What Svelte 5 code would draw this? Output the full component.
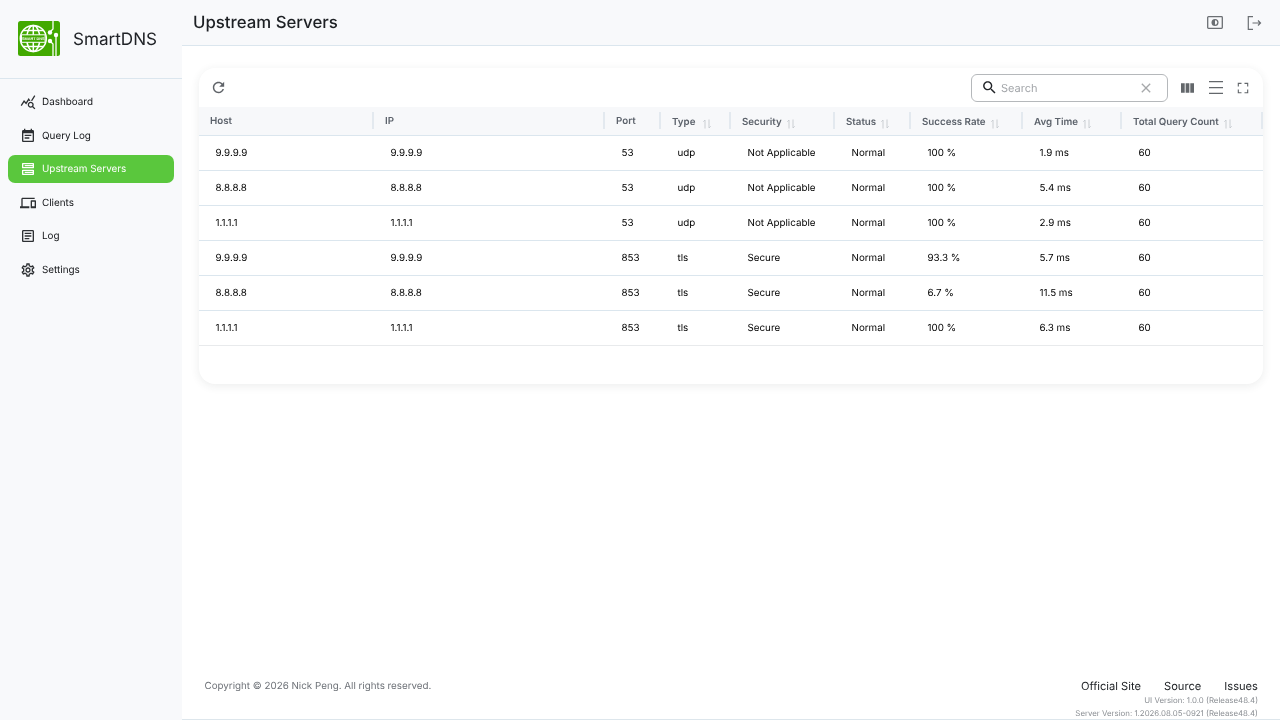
<script>
  const columns = [
    { key: 'Host', width: 175 },
    { key: 'IP', width: 231 },
    { key: 'Port', width: 56 },
    { key: 'Type', width: 70, sort: true, wide: true },
    { key: 'Security', width: 104, sort: true },
    { key: 'Status', width: 76, sort: true },
    { key: 'Success Rate', width: 112, sort: true },
    { key: 'Avg Time', width: 99, sort: true },
    { key: 'Total Query Count', width: 141, sort: true }
  ];
  const rows = [
    ['9.9.9.9', '9.9.9.9', '53', 'udp', 'Not Applicable', 'Normal', '100 %', '1.9 ms', '60'],
    ['8.8.8.8', '8.8.8.8', '53', 'udp', 'Not Applicable', 'Normal', '100 %', '5.4 ms', '60'],
    ['1.1.1.1', '1.1.1.1', '53', 'udp', 'Not Applicable', 'Normal', '100 %', '2.9 ms', '60'],
    ['9.9.9.9', '9.9.9.9', '853', 'tls', 'Secure', 'Normal', '93.3 %', '5.7 ms', '60'],
    ['8.8.8.8', '8.8.8.8', '853', 'tls', 'Secure', 'Normal', '6.7 %', '11.5 ms', '60'],
    ['1.1.1.1', '1.1.1.1', '853', 'tls', 'Secure', 'Normal', '100 %', '6.3 ms', '60']
  ];
  const nav = [
    { label: 'Dashboard', d: 'M19.88 18.47c.44-.7.7-1.51.7-2.39 0-2.49-2.01-4.5-4.5-4.5s-4.5 2.01-4.5 4.5 2.01 4.5 4.49 4.5c.88 0 1.7-.26 2.39-.7L21.58 23 23 21.58l-3.12-3.11zm-3.8.11c-1.38 0-2.5-1.12-2.5-2.5s1.12-2.5 2.5-2.5 2.5 1.12 2.5 2.5-1.12 2.5-2.5 2.5zm-.36-8.5c-.74.02-1.45.18-2.1.45l-.55-.83-3.8 6.18-3.01-3.52-3.63 5.81L1 17l5-8 3 3.5L13 6l2.72 4.08zm2.59.5c-.64-.28-1.33-.45-2.05-.49L21.38 2 23 3.18l-4.69 7.4z' },
    { label: 'Query Log', d: 'M17 10H7v2h10v-2zm2-7h-1V1h-2v2H8V1H6v2H5c-1.11 0-1.99.9-1.99 2L3 19c0 1.1.89 2 2 2h14c1.1 0 2-.9 2-2V5c0-1.1-.9-2-2-2zm0 16H5V8h14v11zm-5-5H7v2h7v-2z' },
    { label: 'Upstream Servers', active: true, d: 'M19 15v4H5v-4h14m1-2H4c-.55 0-1 .45-1 1v6c0 .55.45 1 1 1h16c.55 0 1-.45 1-1v-6c0-.55-.45-1-1-1zM7 16h12v2H7zM19 5v4H5V5h14m1-2H4c-.55 0-1 .45-1 1v6c0 .55.45 1 1 1h16c.55 0 1-.45 1-1V4c0-.55-.45-1-1-1zM7 6h12v2H7z' },
    { label: 'Clients', d: 'M4 6h18V4H4c-1.1 0-2 .9-2 2v11H0v3h14v-3H4V6zm19 2h-6c-.55 0-1 .45-1 1v10c0 .55.45 1 1 1h6c.55 0 1-.45 1-1V9c0-.55-.45-1-1-1zm-1 9h-4v-7h4v7z' },
    { label: 'Log', d: 'M19 5v14H5V5h14m0-2H5c-1.1 0-2 .9-2 2v14c0 1.1.9 2 2 2h14c1.1 0 2-.9 2-2V5c0-1.1-.9-2-2-2zM14 17H7v-2h7v2zm3-4H7v-2h10v2zm0-4H7V7h10v2z' },
    { label: 'Settings', d: 'M19.43 12.98c.04-.32.07-.64.07-.98 0-.34-.03-.66-.07-.98l2.11-1.65c.19-.15.24-.42.12-.64l-2-3.46c-.09-.16-.26-.25-.44-.25-.06 0-.12.01-.17.03l-2.49 1c-.52-.4-1.08-.73-1.69-.98l-.38-2.65C14.46 2.18 14.25 2 14 2h-4c-.25 0-.46.18-.49.42l-.38 2.65c-.61.25-1.17.59-1.69.98l-2.49-1c-.06-.02-.12-.03-.18-.03-.17 0-.34.09-.43.25l-2 3.46c-.13.22-.07.49.12.64l2.11 1.65c-.04.32-.07.65-.07.98 0 .33.03.66.07.98l-2.11 1.65c-.19.15-.24.42-.12.64l2 3.46c.09.16.26.25.44.25.06 0 .12-.01.17-.03l2.49-1c.52.4 1.08.73 1.69.98l.38 2.65c.03.24.24.42.49.42h4c.25 0 .46-.18.49-.42l.38-2.65c.61-.25 1.17-.59 1.69-.98l2.49 1c.06.02.12.03.18.03.17 0 .34-.09.43-.25l2-3.46c.12-.22.07-.49-.12-.64l-2.11-1.65zm-1.98-1.71c.04.31.05.52.05.73 0 .21-.02.43-.05.73l-.14 1.13.89.7 1.08.84-.7 1.21-1.27-.51-1.04-.42-.9.68c-.43.32-.84.56-1.25.73l-1.06.43-.16 1.13-.2 1.35h-1.4l-.19-1.35-.16-1.13-1.06-.43c-.43-.18-.83-.41-1.23-.71l-.91-.7-1.06.43-1.27.51-.7-1.21 1.08-.84.89-.7-.14-1.13c-.03-.31-.05-.54-.05-.74s.02-.43.05-.73l.14-1.13-.89-.7-1.08-.84.7-1.21 1.27.51 1.04.42.9-.68c.43-.32.84-.56 1.25-.73l1.06-.43.16-1.13.2-1.35h1.39l.19 1.35.16 1.13 1.06.43c.43.18.83.41 1.23.71l.91.7 1.06-.43 1.27-.51.7 1.21-1.07.85-.89.7.14 1.13zM12 8c-2.21 0-4 1.79-4 4s1.79 4 4 4 4-1.79 4-4-1.79-4-4-4zm0 6c-1.1 0-2-.9-2-2s.9-2 2-2 2 .9 2 2-.9 2-2 2z' }
  ];
</script>

<div class="app">
  <aside class="sidebar">
    <div class="brand">
      <svg class="logo" viewBox="0 0 42 35" aria-hidden="true">
        <rect width="42" height="35" rx="2.5" fill="#42a900" />
        <g fill="none" stroke="#fff" stroke-width="1.5">
          <circle cx="15.300" cy="17.500" r="13" />
          <ellipse cx="15.300" cy="17.500" rx="6.500" ry="13" />
          <path d="M15.300 4.500v26M5 9.500h20.600M5 25.500h20.600" />
          <path d="M35 0v8l-3 3M38 14v21M32 20l3 3v12" stroke-width="1.300" />
        </g>
        <rect x="3.500" y="13.800" width="23.600" height="7.500" fill="#42a900" stroke="#fff" stroke-width="1" />
        <text x="15.300" y="19" class="logotext">SMART DNS</text>
        <circle cx="32" cy="11.500" r="2.200" fill="#fff" />
        <circle cx="32" cy="20" r="2.200" fill="#fff" />
        <circle cx="38" cy="14" r="2.200" fill="#fff" />
      </svg>
      <span class="brandname">SmartDNS</span>
    </div>
    <nav class="nav">
      {#each nav as item}
        <div class="navitem" class:active={item.active}>
          <svg class="navicon" viewBox="0 0 24 24" aria-hidden="true"><path d={item.d} /></svg>
          <span>{item.label}</span>
        </div>
      {/each}
    </nav>
  </aside>

  <div class="main">
    <header class="topbar">
      <h1>Upstream Servers</h1>
      <div class="topactions">
        <svg class="topicon" viewBox="0 0 16 16" aria-hidden="true">
          <rect x="0.700" y="1.700" width="14.600" height="11.600" rx="0.800" fill="none" stroke="#6b6f73" stroke-width="1.300" />
          <circle cx="8" cy="7.500" r="3.500" fill="#6b6f73" />
          <path d="M8 5.300a2.200 2.200 0 0 1 0 4.400z" fill="#f8f9fb" />
        </svg>
        <svg class="topicon" viewBox="0 0 16 16" aria-hidden="true">
          <path d="M7 1.700H2.300v12.600H7M6.500 8h8M12 5.500 14.500 8 12 10.500" fill="none" stroke="#6b6f73" stroke-width="1.200" />
        </svg>
      </div>
    </header>

    <div class="content">
      <section class="card">
        <div class="toolbar">
          <svg class="refresh" viewBox="0 0 24 24" aria-hidden="true"><path d="M17.65 6.35C16.2 4.9 14.21 4 12 4c-4.420 0-7.990 3.580-7.990 8s3.570 8 7.990 8c3.730 0 6.840-2.550 7.730-6h-2.080c-.82 2.330-3.040 4-5.650 4-3.310 0-6-2.690-6-6s2.690-6 6-6c1.660 0 3.140.69 4.220 1.780L13 11h7V4l-2.350 2.350z" /></svg>
          <div class="tools">
            <div class="search">
              <svg class="searchicon" viewBox="0 0 24 24" aria-hidden="true"><path d="M15.500 14h-.79l-.28-.27C15.410 12.590 16 11.110 16 9.500 16 5.910 13.090 3 9.500 3S3 5.910 3 9.500 5.910 16 9.500 16c1.610 0 3.090-.59 4.230-1.570l.27.28v.79l5 4.990L20.490 19l-4.990-5zm-6 0C7.010 14 5 11.990 5 9.500S7.010 5 9.500 5 14 7.010 14 9.500 11.990 14 9.500 14z" /></svg>
              <span class="placeholder">Search</span>
              <svg class="clear" viewBox="0 0 24 24" aria-hidden="true"><path d="M19 6.410 17.590 5 12 10.590 6.410 5 5 6.410 10.590 12 5 17.590 6.410 19 12 13.410 17.590 19 19 17.590 13.410 12z" /></svg>
            </div>
            <svg class="tool cols" viewBox="0 0 14 10" aria-hidden="true"><path d="M0 0h4v10H0zM5 0h4v10H5zM10 0h4v10h-4z" /></svg>
            <svg class="tool density" viewBox="0 0 14 13" aria-hidden="true"><path d="M0 0h14v1.200H0zM0 6h14v1.200H0zM0 11.800h14V13H0z" /></svg>
            <svg class="tool full" viewBox="0 0 24 24" aria-hidden="true"><path d="M6.500 14H5v5h5v-1.500H6.500V14zM5 10h1.500V6.500H10V5H5v5zm12.500 7.500H14V19h5v-5h-1.500v3.500zM14 5v1.500h3.500V10H19V5h-5z" /></svg>
          </div>
        </div>
        <table>
          <colgroup>
            {#each columns as c}<col style={`width:${c.width}px`} />{/each}
          </colgroup>
          <thead>
            <tr>
              {#each columns as c}
                <th>
                  <div class="thwrap" class:sortable={c.sort} class:wide={c.wide}>
                    <span>{c.key}</span>
                    {#if c.sort}
                      <svg class="sort" viewBox="0 0 10 10" aria-hidden="true"><path d="M3 9.500V1M1.300 2.700 3 1M7 .5V9M7 9l1.700-1.700" fill="none" stroke="#c4c9ce" stroke-width="0.900" /></svg>
                    {/if}
                  </div>
                  <i class="sep"></i>
                </th>
              {/each}
            </tr>
          </thead>
          <tbody>
            {#each rows as row}
              <tr>
                {#each row as cell}<td>{cell}</td>{/each}
              </tr>
            {/each}
          </tbody>
        </table>
        <div class="tablefoot"></div>
      </section>
    </div>

    <footer class="footer">
      <span class="copy">Copyright © 2026 Nick Peng. All rights reserved.</span>
      <div class="meta">
        <div class="links"><span>Official Site</span><span>Source</span><span>Issues</span></div>
        <div class="version">UI Version: 1.0.0 (Release48.4)</div>
        <div class="version">Server Version: 1.2026.08.05-0921 (Release48.4)</div>
      </div>
    </footer>
  </div>
</div>

<style>
  :global(body) {
    margin: 0;
    background: #fff;
  }
  .app {
    display: flex;
    width: 1280px;
    height: 720px;
    overflow: hidden;
    font-family: Inter, sans-serif;
    color: #17191c;
    text-rendering: geometricPrecision;
    will-change: transform;
  }
  .sidebar {
    flex: 0 0 182px;
    background: #f8f9fb;
    display: flex;
    flex-direction: column;
  }
  .brand {
    height: 79px;
    box-sizing: border-box;
    border-bottom: 1px solid #dbe6ee;
    display: flex;
    align-items: flex-start;
    padding: 21px 0 0 18px;
    gap: 13px;
  }
  .logo {
    width: 42px;
    height: 35px;
    flex: none;
  }
  .logotext {
    font-family: 'Liberation Sans', sans-serif;
    font-size: 3.800px;
    font-weight: 700;
    text-anchor: middle;
    fill: #fff;
  }
  .brandname {
    font-size: 17.100px;
    line-height: 37px;
    color: #202327;
  }
  .nav {
    display: flex;
    flex-direction: column;
    gap: 5.500px;
    padding: 9px 8px 0;
  }
  .navitem {
    height: 28px;
    display: flex;
    align-items: center;
    padding-left: 12px;
    gap: 6px;
    border-radius: 7px;
    font-size: 9.900px;
    font-weight: 400;
    color: #111316;
  }
  .navitem.active {
    background: #5ac73d;
    color: #fff;
  }
  .navicon {
    width: 16px;
    height: 16px;
    fill: #2d3033;
    flex: none;
  }
  .navitem.active .navicon {
    fill: #fff;
  }
  .main {
    flex: 1;
    min-width: 0;
    display: flex;
    flex-direction: column;
  }
  .topbar {
    height: 46px;
    box-sizing: border-box;
    flex: none;
    background: #f8f9fb;
    border-bottom: 1px solid #dbe6ee;
    display: flex;
    align-items: center;
    justify-content: space-between;
    padding: 1px 18px 0 11px;
  }
  h1 {
    margin: 0;
    font-size: 16.800px;
    font-weight: 500;
    color: #1d2024;
  }
  .topactions {
    display: flex;
    gap: 23px;
    align-items: center;
    margin-top: -1px;
  }
  .topicon {
    width: 16px;
    height: 16px;
  }
  .content {
    flex: 1;
    padding: 22px 17px 0;
  }
  .card {
    width: 1064px;
    background: #fff;
    border-radius: 16px;
    box-shadow: 0 2px 10px rgba(40, 50, 60, 0.09);
    overflow: hidden;
  }
  .toolbar {
    height: 39px;
    display: flex;
    align-items: center;
    justify-content: space-between;
    padding: 0 12px 0 11px;
  }
  .refresh {
    width: 17px;
    height: 17px;
    fill: #5f6368;
  }
  .tools {
    display: flex;
    align-items: center;
  }
  .search {
    width: 197px;
    height: 28px;
    box-sizing: border-box;
    border: 1px solid #b5b8bb;
    border-radius: 6px;
    display: flex;
    align-items: center;
    padding: 0 13px 0 9px;
    gap: 3px;
    margin-right: 12px;
  }
  .searchicon {
    width: 17px;
    height: 17px;
    fill: #202327;
    flex: none;
  }
  .placeholder {
    flex: 1;
    font-size: 11px;
    color: #a2a5a9;
  }
  .clear {
    width: 16px;
    height: 16px;
    fill: #a6a8aa;
    flex: none;
  }
  .tool {
    flex: none;
    fill: #63676b;
  }
  .cols {
    width: 13px;
    height: 10px;
    margin-left: 1px;
    margin-right: 15px;
  }
  .density {
    width: 14px;
    height: 13px;
    margin-right: 11px;
  }
  .full {
    width: 18px;
    height: 18px;
    margin-right: -1px;
  }
  table {
    width: 1064px;
    table-layout: fixed;
    border-collapse: collapse;
  }
  thead tr {
    height: 28px;
    background: #f7f8fa;
    border-bottom: 1px solid #dbe6ee;
  }
  th {
    position: relative;
    padding: 4px 0 0 11px;
    text-align: left;
    font-size: 9.750px;
    font-weight: 600;
    color: #5c626b;
  }
  .thwrap {
    display: flex;
    align-items: center;
    gap: 4px;
    margin-bottom: 2px;
  }
  .thwrap.sortable {
    margin-bottom: 0;
  }
  .thwrap.wide {
    gap: 7px;
  }
  .sort {
    width: 10px;
    height: 10px;
    flex: none;
    margin-top: 2px;
  }
  .sep {
    position: absolute;
    right: 0;
    top: 5px;
    bottom: 6px;
    width: 2px;
    background: #e3e9ef;
  }
  tbody tr {
    height: 35px;
    border-bottom: 1px solid #dbe6ee;
  }
  tbody tr:last-child {
    border-bottom-color: #e8eaec;
  }
  td {
    padding: 2px 0 0 16.500px;
    font-size: 9.800px;
    color: #000;
    white-space: nowrap;
  }
  .tablefoot {
    height: 38px;
  }
  .footer {
    flex: none;
    height: 54px;
    box-sizing: border-box;
    border-bottom: 1px solid #dde6ec;
    display: flex;
    justify-content: space-between;
    align-items: flex-start;
    padding: 13px 22px 0 22.500px;
  }
  .copy {
    font-size: 9.800px;
    color: #6e7278;
    line-height: 15px;
  }
  .meta {
    text-align: right;
  }
  .links {
    display: flex;
    justify-content: flex-end;
    gap: 23px;
    font-size: 11.150px;
    line-height: 15px;
    color: #1d2024;
  }
  .version {
    font-size: 7.850px;
    line-height: 13px;
    color: #8a8e93;
  }
</style>
